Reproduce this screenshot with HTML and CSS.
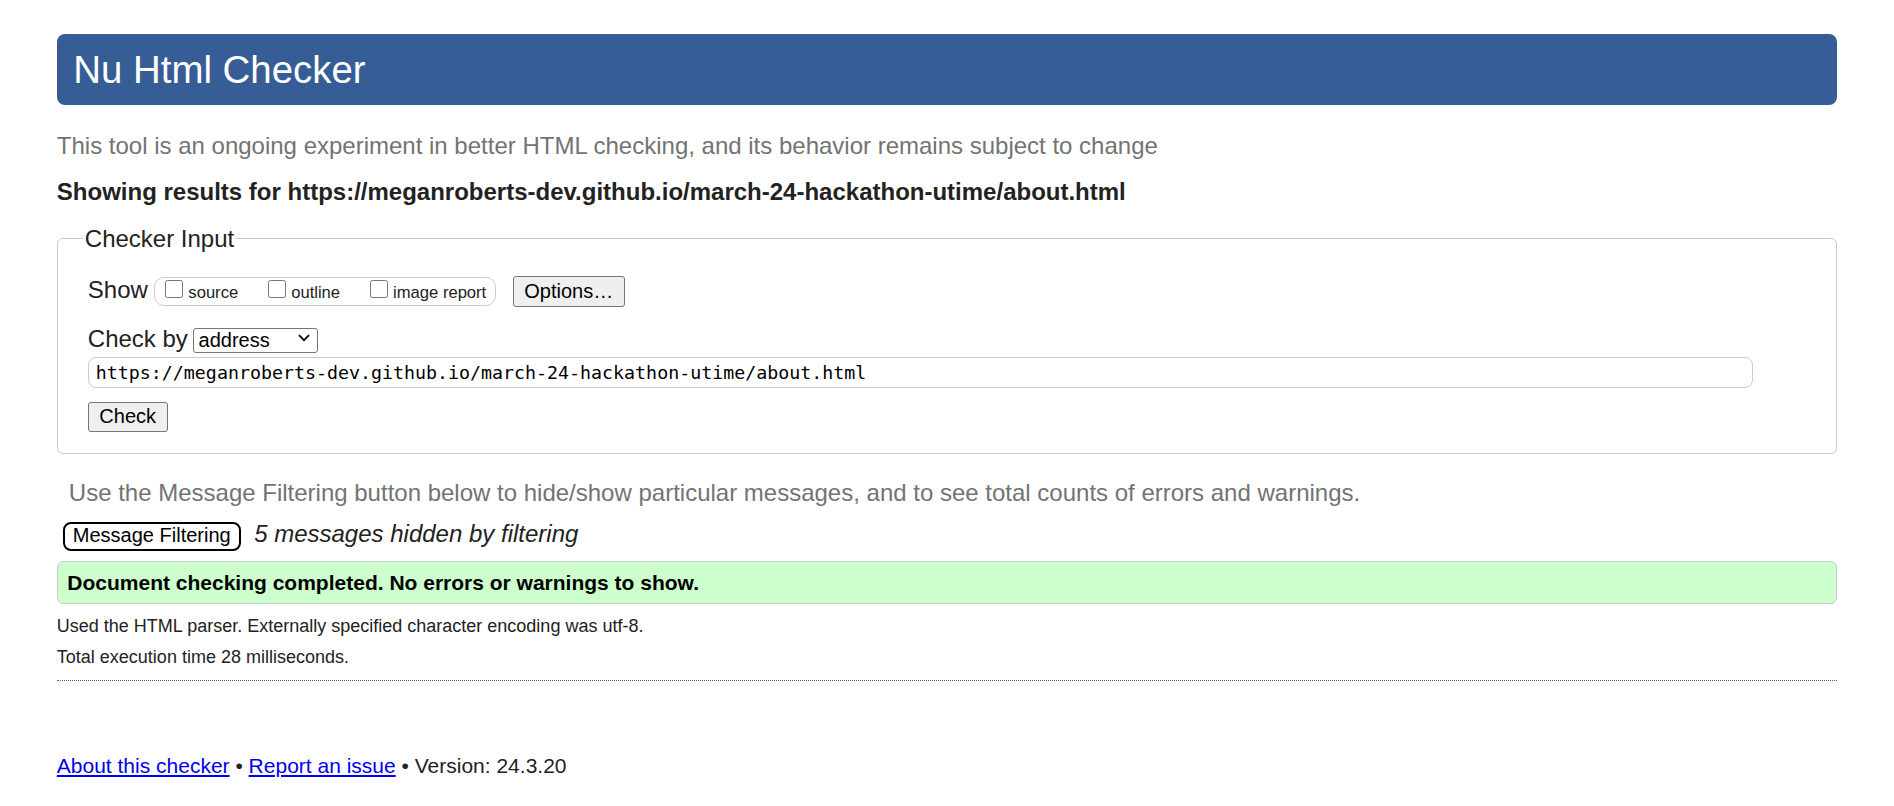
FILE: index.html
```html
<!DOCTYPE html>
<html lang="en">
<head>
<meta charset="utf-8">
<title>Showing results for https://meganroberts-dev.github.io/march-24-hackathon-utime/about.html - Nu Html Checker</title>
<link rel="stylesheet" href="styles.css">
</head>
<body>
<h1 class="title">Nu Html Checker</h1>
<p class="intro">This tool is an ongoing experiment in better HTML checking, and its behavior remains subject to change</p>
<p class="showing">Showing results for https://meganroberts-dev.github.io/march-24-hackathon-utime/about.html</p>
<fieldset class="checker">
  <legend class="checker-legend">Checker Input</legend>
  <div class="row row-show">
    <span class="label">Show</span>
    <span class="pill">
      <label class="opt"><input type="checkbox" class="cb">source</label>
      <label class="opt opt-gap"><input type="checkbox" class="cb">outline</label>
      <label class="opt opt-gap"><input type="checkbox" class="cb">image report</label>
    </span>
    <button class="btn btn-options" type="button">Options…</button>
  </div>
  <div class="row row-by">
    <label class="label" for="docselect">Check by</label>
    <span class="select-wrap">
      <select class="select" id="docselect"><option>address</option><option>file upload</option><option>text input</option></select>
      <svg class="chevron" width="12" height="8" viewBox="0 0 12 8" aria-hidden="true"><path d="M1 1.2 L6 6.2 L11 1.2" fill="none" stroke="#000" stroke-width="1.8"/></svg>
    </span>
  </div>
  <input class="url" type="url" value="https://meganroberts-dev.github.io/march-24-hackathon-utime/about.html">
  <div class="row row-check"><button class="btn btn-check" type="button">Check</button></div>
</fieldset>
<p class="filter-note">Use the Message Filtering button below to hide/show particular messages, and to see total counts of errors and warnings.</p>
<div class="row filter-row">
  <button class="btn-filter" type="button">Message Filtering</button>
  <em class="hidden-count">5 messages hidden by filtering</em>
</div>
<div class="success">Document checking completed. No errors or warnings to show.</div>
<p class="meta">Used the HTML parser. Externally specified character encoding was utf-8.</p>
<p class="meta meta-second">Total execution time 28 milliseconds.</p>
<hr class="rule">
<p class="footer"><a class="link" href="#about">About this checker</a> • <a class="link" href="#issue">Report an issue</a> • Version: 24.3.20</p>
</body>
</html>
```
FILE: styles.css
```css
html, body {
  background: #fff;
}
body {
  margin: 0;
  padding: 34px 3% 0;
  font-family: "Liberation Sans", Arial, Helvetica, sans-serif;
  color: #222;
  font-size: 24px;
}
.title {
  margin: 0;
  font-size: 38.4px;
  font-weight: normal;
  line-height: 43px;
  padding: 14px 15px 14px 16.5px;
  background: #365d95;
  color: #fff;
  border-radius: 8px;
}
.intro {
  margin: 26.6px 0 0;
  color: #737373;
  font-size: 24px;
}
.showing {
  margin: 18px 0 0;
  font-weight: bold;
  font-size: 24px;
  color: #222;
}
.checker {
  margin: 19.4px 0 0;
  padding: 23px 29px 21px 30px;
  border: 1px solid #ccc;
  border-radius: 6px;
  min-width: 0;
}
.checker-legend {
  padding: 0 2px;
  margin-left: -5px;
  font-size: 24px;
  color: #222;
}
.row {
  display: flex;
  align-items: baseline;
}
.label {
  font-size: 24px;
  color: #222;
}
.pill {
  display: inline-flex;
  align-items: baseline;
  margin-left: 6.5px;
  padding: 2px 9px 2px 10px;
  border: 1px solid #ccc;
  border-radius: 10px;
  font-size: 16.6px;
  color: #222;
}
.opt {
  display: inline-flex;
  align-items: baseline;
}
.opt-gap {
  margin-left: 30px;
}
.cb {
  width: 18px;
  height: 18px;
  margin: 0 5px 1px 0;
}
.btn {
  font-family: "Liberation Sans", Arial, sans-serif;
  font-size: 20px;
  line-height: 23px;
  padding: 3px 10.5px;
  border: 1px solid #767676;
  border-radius: 3px;
  background: #efefef;
  color: #000;
}
.btn-options {
  margin-left: 16.5px;
}
.btn-check {
  padding: 2px 10.5px 3px;
}
.row-by {
  margin-top: 18px;
}
.select-wrap {
  position: relative;
  display: inline-block;
  margin-left: 4.7px;
}
.select {
  appearance: none;
  -webkit-appearance: none;
  width: 125px;
  height: 25px;
  font-family: "Liberation Sans", Arial, sans-serif;
  font-size: 20px;
  line-height: 23px;
  padding: 0 0 0 5px;
  border: 1px solid #767676;
  border-radius: 3px;
  background-color: #fff;
  color: #000;
}
.chevron {
  position: absolute;
  right: 8px;
  top: 9px;
  pointer-events: none;
}
.url {
  display: block;
  box-sizing: border-box;
  margin: 4px 0 0;
  width: calc(100% - 54px);
  height: 31px;
  padding: 0 7px;
  border: 1px solid #ccc;
  border-radius: 8px;
  font-family: "DejaVu Sans Mono", "Liberation Mono", monospace;
  font-size: 18.3px;
  color: #000;
  background: #fff;
}
.row-check {
  margin-top: 14px;
}
.filter-note {
  margin: 24.6px 0 0;
  padding-left: 12px;
  color: #737373;
  font-size: 24px;
}
.filter-row {
  margin-top: 13px;
  padding-left: 6px;
}
.btn-filter {
  font-family: "Liberation Sans", Arial, sans-serif;
  font-size: 20px;
  line-height: 23px;
  padding: 0 8px 2px;
  border: 2px solid #000;
  border-radius: 8px;
  background: #fff;
  color: #000;
}
.hidden-count {
  margin-left: 13.5px;
  font-size: 24px;
  font-style: italic;
  color: #222;
}
.success {
  margin-top: 10.7px;
  padding: 9px 9.5px 8px;
  background: #ccffcc;
  border: 1px solid #ccc;
  border-radius: 6px;
  font-weight: bold;
  font-size: 21px;
  color: #000;
}
.meta {
  margin: 11.4px 0 0;
  font-size: 18px;
  color: #222;
}
.meta-second {
  margin-top: 10.6px;
}
.rule {
  margin: 11.6px 0 0;
  height: 0;
  border: 0;
  border-top: 1px dotted #666;
}
.footer {
  margin: 73.3px 0 0;
  font-size: 21px;
  color: #222;
}
.link {
  color: #0000ee;
  text-decoration: underline;
}
```
